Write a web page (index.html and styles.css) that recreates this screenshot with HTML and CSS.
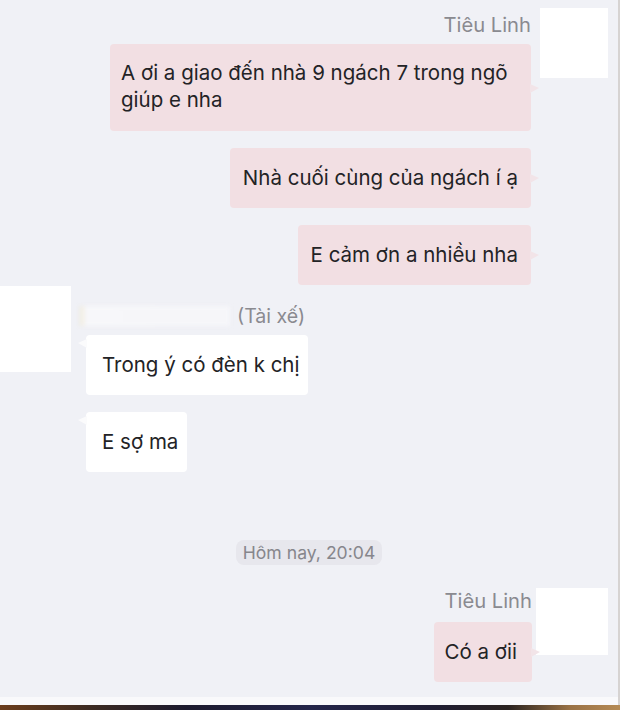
FILE: index.html
```html
<!DOCTYPE html>
<html lang="vi">
<head>
<meta charset="utf-8">
<title>Chat</title>
<link rel="stylesheet" href="styles.css">
</head>
<body>
<div class="screen">
  <div class="chat">
    <div class="group out first">
      <div class="col">
        <div class="name">Tiêu Linh</div>
        <div class="bubble pink wide">A ơi a giao đến nhà 9 ngách 7 trong ngõ giúp e nha</div>
        <div class="bubble pink">Nhà cuối cùng của ngách í ạ</div>
        <div class="bubble pink">E cảm ơn a nhiều nha</div>
      </div>
      <div class="avatar av1"></div>
    </div>

    <div class="group in">
      <div class="avatar av2"></div>
      <div class="col">
        <div class="name-row"><span class="blurred"></span><span class="role">(Tài xế)</span></div>
        <div class="bubble white">Trong ý có đèn k chị</div>
        <div class="bubble white">E sợ ma</div>
      </div>
    </div>

    <div class="time-row"><span class="time">Hôm nay, 20:04</span></div>

    <div class="group out last">
      <div class="col">
        <div class="name">Tiêu Linh</div>
        <div class="bubble pink low">Có a ơii</div>
      </div>
      <div class="avatar av3"></div>
    </div>
  </div>
  <div class="footer"></div>
  <div class="desk"></div>
</div>
</body>
</html>
```

FILE: styles.css
```css
* { box-sizing: border-box; }
html, body { margin: 0; padding: 0; }
body {
  width: 620px;
  height: 710px;
  overflow: hidden;
  font-family: Inter, "Liberation Sans", Arial, sans-serif;
  color: #232326;
  background: #f0f1f6;
}
.screen {
  width: 620px;
  height: 710px;
  display: flex;
  flex-direction: column;
}
.chat {
  height: 697px;
  background: #f0f1f6;
  border-right: 2px solid #d6d3d2;
  display: flex;
  flex-direction: column;
}
.footer {
  height: 8px;
  background: #f9f9fb;
  border-right: 2px solid #d6d3d2;
}
.desk {
  height: 5px;
  background: linear-gradient(90deg, #6b3d1c 0%, #3b2a22 15%, #1c1a2e 30%, #24254a 50%, #1f1d33 70%, #2b2320 82%, #9a7245 92%, #b58a55 100%);
}

.group { display: flex; }
.group.out { justify-content: flex-end; padding-right: 10px; }
.group.first { padding-top: 8px; gap: 9px; }
.group.last { margin-top: 23px; gap: 4px; }
.group.in { margin-top: 1px; gap: 9px; }

.col { display: flex; flex-direction: column; gap: 17px; }
.out .col { align-items: flex-end; padding-top: 5px; }
.last .col { padding-top: 1px; gap: 9px; }
.in .col { align-items: flex-start; padding-top: 18px; gap: 17px; }

.name {
  font-size: 20.2px;
  line-height: 24px;
  color: #8a8a90;
  margin-bottom: -10px;
}
.last .name { margin-bottom: 0; }

.avatar { background: #ffffff; flex: none; }
.av1 { width: 68px; height: 70px; }
.av2 { width: 71px; height: 86px; }
.av3 { width: 72px; height: 67px; }

.bubble {
  position: relative;
  font-size: 20.5px;
  line-height: 27px;
  padding: 16px 13px 17px 13px;
  border-radius: 4px;
}
.bubble.wide { max-width: 421px; padding: 15px 11px 18px; }
.bubble.low { padding-left: 11px; padding-right: 15px; }
.pink { background: #f2dfe3; }
.pink::after {
  content: "";
  position: absolute;
  right: -8px;
  top: calc(50% - 4px);
  border-left: 9px solid #f2e4e8;
  border-top: 4px solid transparent;
  border-bottom: 5px solid transparent;
}
.white { background: #ffffff; margin-left: 6px; padding-left: 16px; padding-right: 9px; }
.white::before {
  content: "";
  position: absolute;
  left: -8px;
  top: 4px;
  border-right: 9px solid #fbfbfc;
  border-top: 4px solid transparent;
  border-bottom: 5px solid transparent;
}

.name-row {
  display: flex;
  align-items: center;
  gap: 7px;
  height: 24px;
  margin-bottom: -10px;
}
.blurred {
  width: 150px;
  height: 20px;
  background: linear-gradient(90deg, #efe9d6 0%, #f7f7fa 4%, #f6f6f9 100%);
  filter: blur(2px);
}
.role {
  font-size: 19.6px;
  line-height: 24px;
  color: #8a8a90;
}

.time-row {
  display: flex;
  justify-content: center;
  margin-top: 68px;
}
.time {
  display: inline-block;
  height: 25px;
  line-height: 25px;
  padding: 0 7px;
  border-radius: 8px;
  background: #e7e7ed;
  color: #86868c;
  font-size: 17.6px;
}
```
